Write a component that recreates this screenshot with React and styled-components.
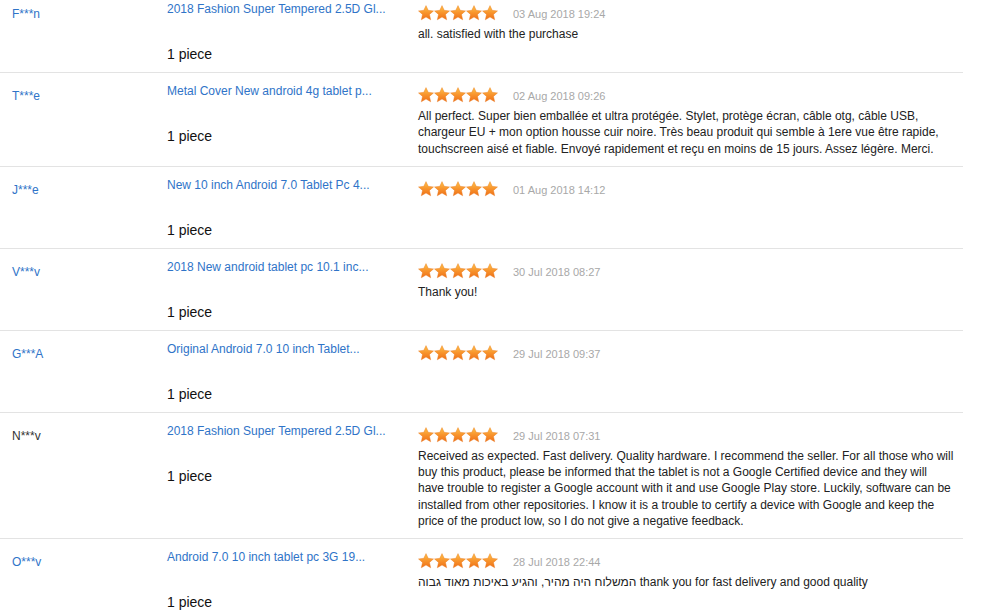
import React from 'react';
import styled, { createGlobalStyle } from 'styled-components';

const GlobalStyle = createGlobalStyle`
  html, body {
    margin: 0;
    padding: 0;
    background: #ffffff;
    overflow: hidden;
  }
  body {
    font-family: "Liberation Sans", Arial, sans-serif;
  }
`;

const reviews = [
  {
    name: 'F***n',
    product: '2018 Fashion Super Tempered 2.5D Gl...',
    date: '03 Aug 2018 19:24',
    text: 'all. satisfied with the purchase',
  },
  {
    name: 'T***e',
    product: 'Metal Cover New android 4g tablet p...',
    date: '02 Aug 2018 09:26',
    text: 'All perfect. Super bien emballée et ultra protégée. Stylet, protège écran, câble otg, câble USB, chargeur EU + mon option housse cuir noire. Très beau produit qui semble à 1ere vue être rapide, touchscreen aisé et fiable. Envoyé rapidement et reçu en moins de 15 jours. Assez légère. Merci.',
  },
  {
    name: 'J***e',
    product: 'New 10 inch Android 7.0 Tablet Pc 4...',
    date: '01 Aug 2018 14:12',
    text: '',
  },
  {
    name: 'V***v',
    product: '2018 New android tablet pc 10.1 inc...',
    date: '30 Jul 2018 08:27',
    text: 'Thank you!',
  },
  {
    name: 'G***A',
    product: 'Original Android 7.0 10 inch Tablet...',
    date: '29 Jul 2018 09:37',
    text: '',
  },
  {
    name: 'N***v',
    plain: true,
    product: '2018 Fashion Super Tempered 2.5D Gl...',
    date: '29 Jul 2018 07:31',
    text: 'Received as expected. Fast delivery. Quality hardware. I recommend the seller. For all those who will buy this product, please be informed that the tablet is not a Google Certified device and they will have trouble to register a Google account with it and use Google Play store. Luckily, software can be installed from other repositories. I know it is a trouble to certify a device with Google and keep the price of the product low, so I do not give a negative feedback.',
  },
  {
    name: 'O***v',
    product: 'Android 7.0 10 inch tablet pc 3G 19...',
    date: '28 Jul 2018 22:44',
    text: 'המשלוח היה מהיר, והגיע באיכות מאוד גבוה thank you for fast delivery and good quality',
  },
];

const List = styled.div`
  margin-top: -9px;
  width: 963px;
`;

const Row = styled.div`
  display: flex;
  align-items: flex-start;
  padding: 10px 0 9px;
  border-bottom: 1px solid #e3e3e3;
`;

const NameCol = styled.div`
  width: 155px;
  padding: 5px 0 0 12px;
  font-size: 12px;
  line-height: 16px;
  color: ${(p) => (p.$plain ? '#333333' : '#2f74c8')};
`;

const ProductCol = styled.div`
  width: 251px;
  display: flex;
  flex-direction: column;
`;

const ProductLink = styled.a`
  font-size: 12px;
  line-height: 16px;
  color: #2f74c8;
  text-decoration: none;
  white-space: nowrap;
`;

const Qty = styled.div`
  margin-top: 28px;
  font-size: 14px;
  line-height: 18px;
  color: #111111;
`;

const ReviewCol = styled.div`
  flex: 1;
  padding-top: 4px;
  display: flex;
  flex-direction: column;
  gap: 4px;
`;

const RatingLine = styled.div`
  display: flex;
  align-items: center;
  height: 16px;
  gap: 15px;
`;

const Stars = styled.div`
  display: flex;
  width: 80px;
`;

const DateText = styled.span`
  font-size: 11px;
  color: #a8a8a8;
  line-height: 16px;
  padding-top: 2px;
`;

const Comment = styled.p`
  margin: 0;
  padding: 1px 7px 0 0;
  font-size: 12px;
  line-height: 16.3px;
  color: #222222;
`;

const Star = () => (
  <svg width="16" height="16" viewBox="0 0 16 16">
    <defs>
      <linearGradient id="starFill" x1="0" y1="0" x2="0" y2="1">
        <stop offset="0" stopColor="#ffc24a" />
        <stop offset="0.55" stopColor="#f7902a" />
        <stop offset="1" stopColor="#ee7018" />
      </linearGradient>
    </defs>
    <path
      d="M8 0.6 L10.2 5.3 L15.5 5.9 L11.5 9.4 L12.7 14.8 L8 12 L3.3 14.8 L4.5 9.4 L0.5 5.9 L5.8 5.3 Z"
      fill="url(#starFill)"
      stroke="#e8761c"
      strokeWidth="0.4"
      strokeLinejoin="round"
    />
  </svg>
);

const ReviewRow = ({ r }) => (
  <Row>
    <NameCol $plain={r.plain}>{r.name}</NameCol>
    <ProductCol>
      <ProductLink href="#">{r.product}</ProductLink>
      <Qty>1 piece</Qty>
    </ProductCol>
    <ReviewCol>
      <RatingLine>
        <Stars>
          {[0, 1, 2, 3, 4].map((i) => (
            <Star key={i} />
          ))}
        </Stars>
        <DateText>{r.date}</DateText>
      </RatingLine>
      {r.text && <Comment>{r.text}</Comment>}
    </ReviewCol>
  </Row>
);

export default function App() {
  return (
    <>
      <GlobalStyle />
      <List>
        {reviews.map((r, i) => (
          <ReviewRow key={i} r={r} />
        ))}
      </List>
    </>
  );
}
